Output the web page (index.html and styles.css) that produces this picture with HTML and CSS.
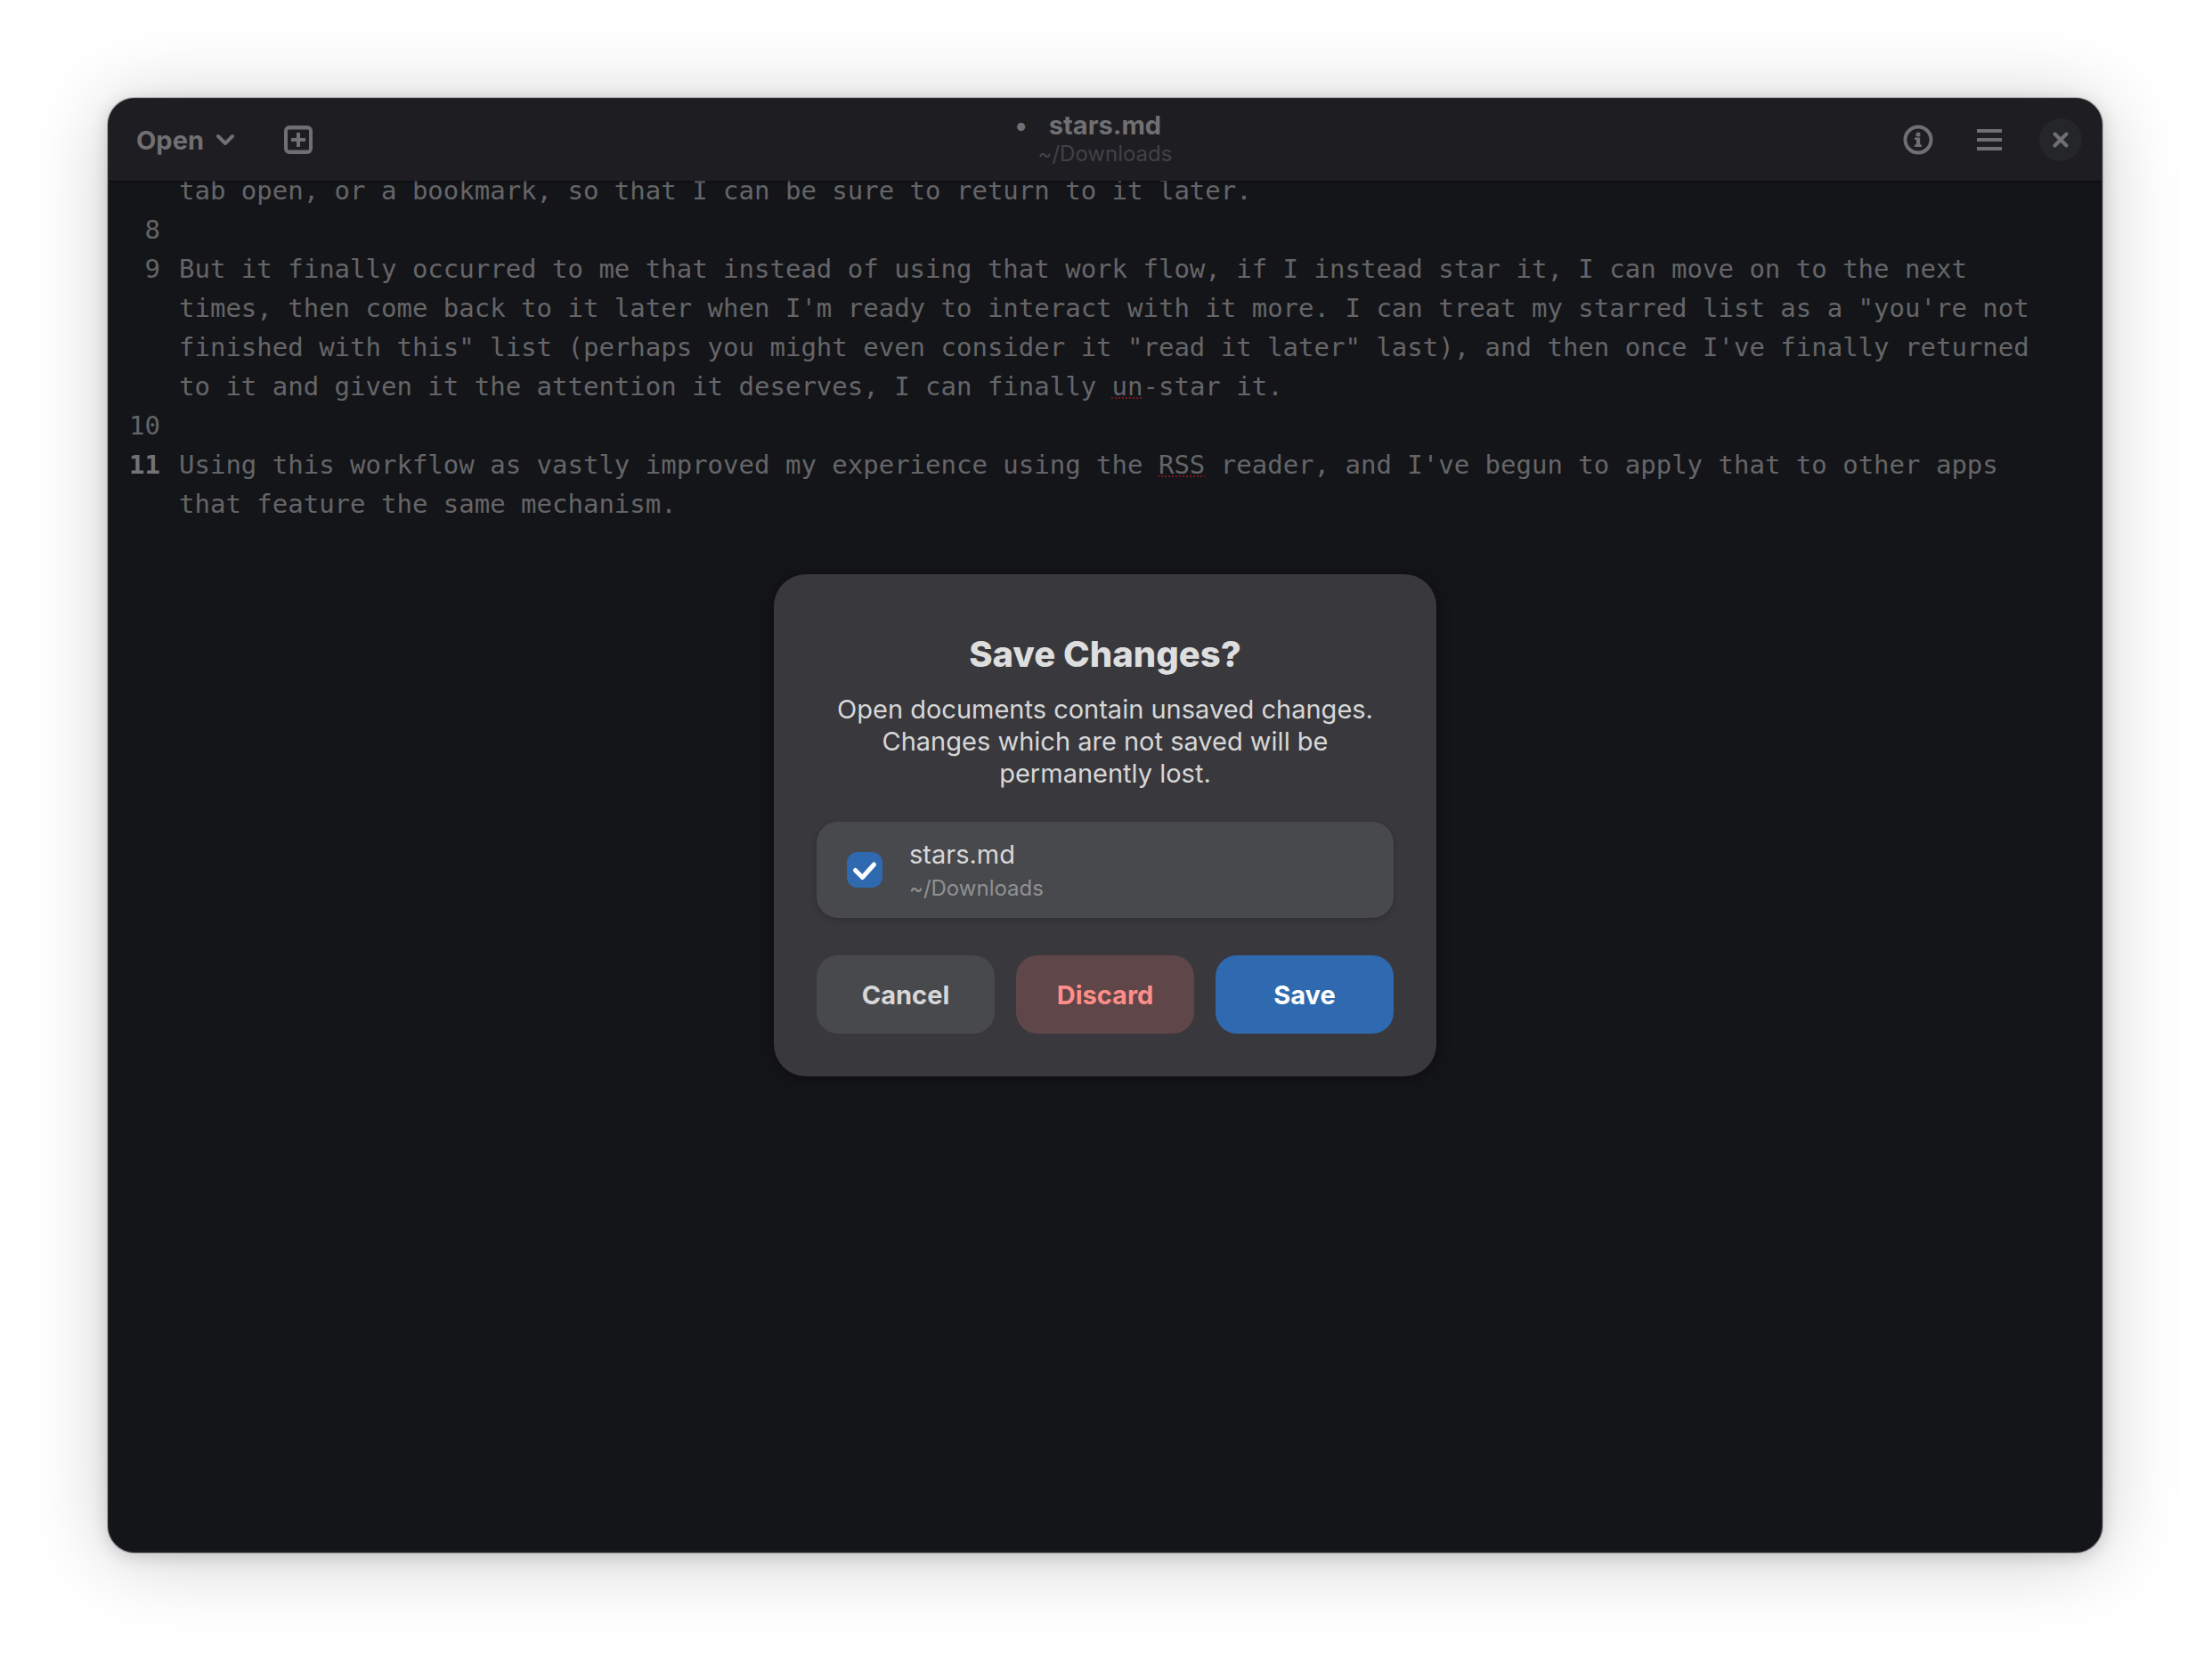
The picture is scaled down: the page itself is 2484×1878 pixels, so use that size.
FILE: index.html
```html
<!DOCTYPE html>
<html lang="en">
	<head>
		<meta charset="UTF-8" />
		<meta name="viewport" content="width=device-width, initial-scale=1.0" />
		<title>stars.md - Text Editor</title>
		<link rel="stylesheet" href="styles.css">
	</head>
	<body>
		<main class="window">
			<header class="headerbar">
				<div class="header-start">
					<button type="button" class="open-button">
						Open
						<svg width="22" height="16" viewBox="0 0 22 16" fill="none" stroke="currentColor" stroke-width="4" stroke-linecap="round" stroke-linejoin="round">
							<path d="M3 4 L11 12 L19 4" />
						</svg>
					</button>
					<button type="button" class="icon-button" aria-label="New document">
						<svg width="34" height="34" viewBox="0 0 34 34" fill="none" stroke="currentColor" stroke-width="4">
							<rect x="3" y="3" width="28" height="28" rx="4" />
							<path d="M3 4 H31 M3 30 H31" stroke-width="3" />
							<path d="M17 9 V25 M9 17 H25" />
						</svg>
					</button>
				</div>

				<div class="title">
					<h1 class="title-name"><span class="title-dot">•</span>stars.md</h1>
					<p class="title-path">~/Downloads</p>
				</div>

				<div class="header-end">
					<button type="button" class="icon-button" aria-label="Document properties">
						<svg width="34" height="34" viewBox="0 0 34 34" fill="none" stroke="currentColor" stroke-width="4">
							<circle cx="17" cy="17" r="14.5" />
							<circle cx="17" cy="11" r="2.6" fill="currentColor" stroke="none" />
							<path d="M13 14.5 H19.2 V22.5 H21 V25 H13 V22.5 H15 V17 H13 Z" fill="currentColor" stroke="none" />
						</svg>
					</button>
					<button type="button" class="icon-button" aria-label="Main menu">
						<svg width="34" height="34" viewBox="0 0 34 34" fill="none" stroke="currentColor" stroke-width="4">
							<path d="M3 7 H31 M3 17 H31 M3 27 H31" />
						</svg>
					</button>
					<button type="button" class="close-button" aria-label="Close">
						<svg width="20" height="20" viewBox="0 0 20 20" fill="none" stroke="currentColor" stroke-width="4" stroke-linecap="round">
							<path d="M3.5 3.5 L16.5 16.5 M16.5 3.5 L3.5 16.5" />
						</svg>
					</button>
				</div>
			</header>

			<section class="editor">
				<div class="line line-scrolled">
					<span class="line-number"></span>
					<p class="line-text">tab open, or a bookmark, so that I can be sure to return to it later.</p>
				</div>
				<div class="line">
					<span class="line-number">8</span>
					<p class="line-text"></p>
				</div>
				<div class="line">
					<span class="line-number">9</span>
					<p class="line-text">But it finally occurred to me that instead of using that work flow, if I instead star it, I can move on to the next times, then come back to it later when I'm ready to interact with it more. I can treat my starred list as a "you're not finished with this" list (perhaps you might even consider it "read it later" last), and then once I've finally returned to it and given it the attention it deserves, I can finally <span class="misspelled">un</span>-star it.</p>
				</div>
				<div class="line">
					<span class="line-number">10</span>
					<p class="line-text"></p>
				</div>
				<div class="line">
					<span class="line-number line-current">11</span>
					<p class="line-text">Using this workflow as vastly improved my experience using the <span class="misspelled">RSS</span> reader, and I've begun to apply that to other apps that feature the same mechanism.</p>
				</div>
			</section>

			<div class="overlay">
				<form class="dialog" role="dialog" aria-labelledby="dialogTitle">
					<h2 class="dialog-title" id="dialogTitle">Save Changes?</h2>
					<p class="dialog-body">Open documents contain unsaved changes. Changes which are not saved will be permanently lost.</p>

					<label class="file-row" for="saveFile">
						<input type="checkbox" class="file-check" id="saveFile" checked />
						<span class="file-info">
							<span class="file-name">stars.md</span>
							<span class="file-path">~/Downloads</span>
						</span>
					</label>

					<div class="dialog-actions">
						<button type="button" class="action">Cancel</button>
						<button type="button" class="action action-discard">Discard</button>
						<button type="button" class="action action-save">Save</button>
					</div>
				</form>
			</div>
		</main>
	</body>
</html>
```
FILE: styles.css
```css
* {
	box-sizing: border-box;
}

body {
	display: flex;
	min-height: 100vh;
	margin: 0;
	padding: 110px 123px 134px 121px;
	background-color: #fff;
	font-family: Inter, "Liberation Sans", sans-serif;
	font-size: 29px;
}

h1,
h2,
p {
	margin: 0;
}

button {
	padding: 0;
	border: none;
	background: none;
	color: inherit;
	font: inherit;
	font-weight: bold;
}

svg {
	display: block;
}

.window {
	position: relative;
	display: flex;
	flex: 1;
	flex-direction: column;
	min-width: 0;
	border: 1px solid #2b2c30;
	border-radius: 30px;
	background-color: #141519;
	color: #656568;
	overflow: hidden;
	box-shadow: 0 0 0 1px rgba(0, 0, 0, 0.2), 0 4px 20px rgba(0, 0, 0, 0.16), 0 6px 90px rgba(0, 0, 0, 0.2);
}

/* Header bar */
.headerbar {
	position: relative;
	display: grid;
	grid-template-columns: 1fr auto 1fr;
	align-items: center;
	height: 92px;
	padding: 0 22px;
	background-color: #1e1d22;
	color: #707073;
	box-shadow: 0 1px 3px rgba(0, 0, 0, 0.5);
}

.header-start,
.header-end {
	display: flex;
	align-items: center;
}

.header-start {
	gap: 54px;
	padding-left: 9px;
}

.header-end {
	justify-content: flex-end;
	gap: 46px;
}

.open-button {
	display: flex;
	align-items: center;
	gap: 13px;
}

.close-button {
	display: grid;
	place-items: center;
	width: 48px;
	height: 48px;
	margin-left: -7px;
	border-radius: 50%;
	background-color: #25262a;
}

.title {
	text-align: center;
}

.title-name {
	position: relative;
	font-size: 29px;
	line-height: 32px;
}

/* hangs left of the name so the name stays centred */
.title-dot {
	position: absolute;
	right: 100%;
	margin-right: 12px;
}

.title-path {
	color: #424246;
	font-size: 24px;
	line-height: 32px;
}

/* Editor */
.editor {
	flex: 1;
	padding: 0 36px 44px 22px;
	overflow: hidden;
	font-family: "DejaVu Sans Mono", "Liberation Mono", monospace;
	line-height: 44px;
}

.line {
	display: grid;
	grid-template-columns: 36px 1fr;
	gap: 21px;
	min-height: 44px;
}

.line-scrolled {
	margin-top: -11px;
}

.line-number {
	text-align: right;
}

.line-current {
	color: #737377;
	font-weight: bold;
}

.misspelled {
	text-decoration: underline dotted #7a1620 2px;
	text-underline-offset: 2px;
}

/* Dialog */
.overlay {
	position: absolute;
	inset: 0;
	display: grid;
	place-items: center;
}

.dialog {
	width: 744px;
	max-width: 100%;
	padding: 66px 48px 48px;
	border-radius: 36px;
	background-color: #39393d;
	color: #d7d7d8;
	text-align: center;
	box-shadow: 0 2px 16px rgba(0, 0, 0, 0.4);
}

.dialog-title {
	color: #dedede;
	font-size: 40px;
	font-weight: 800;
	line-height: 48px;
}

.dialog-body {
	margin-top: 20px;
	line-height: 36px;
}

.file-row {
	display: flex;
	align-items: center;
	gap: 30px;
	min-height: 108px;
	margin: 36px 0 42px;
	padding: 0 34px;
	border-radius: 24px;
	background-color: #48494c;
	text-align: left;
	box-shadow: 0 2px 6px rgba(0, 0, 0, 0.2);
}

.file-check {
	appearance: none;
	width: 40px;
	height: 40px;
	margin: 0;
	border-radius: 12px;
	background: #2f69b0 url('data:image/svg+xml,<svg xmlns="http://www.w3.org/2000/svg" viewBox="0 0 40 40" fill="none" stroke="white" stroke-width="5" stroke-linecap="round" stroke-linejoin="round"><path d="M9.5 20.5 L17.5 28.5 L30.5 14"/></svg>') center / 40px 40px;
}

.file-info {
	display: flex;
	flex-direction: column;
	padding-top: 4px;
}

.file-name {
	line-height: 38px;
}

.file-path {
	color: #909193;
	font-size: 24px;
	line-height: 38px;
}

.dialog-actions {
	display: grid;
	grid-template-columns: repeat(3, 1fr);
	gap: 24px;
}

.action {
	height: 88px;
	border-radius: 24px;
	background-color: #48494c;
}

.action-discard {
	background-color: #5f4649;
	color: #ff8d88;
}

.action-save {
	background-color: #2f69b0;
	color: #fff;
}
```
